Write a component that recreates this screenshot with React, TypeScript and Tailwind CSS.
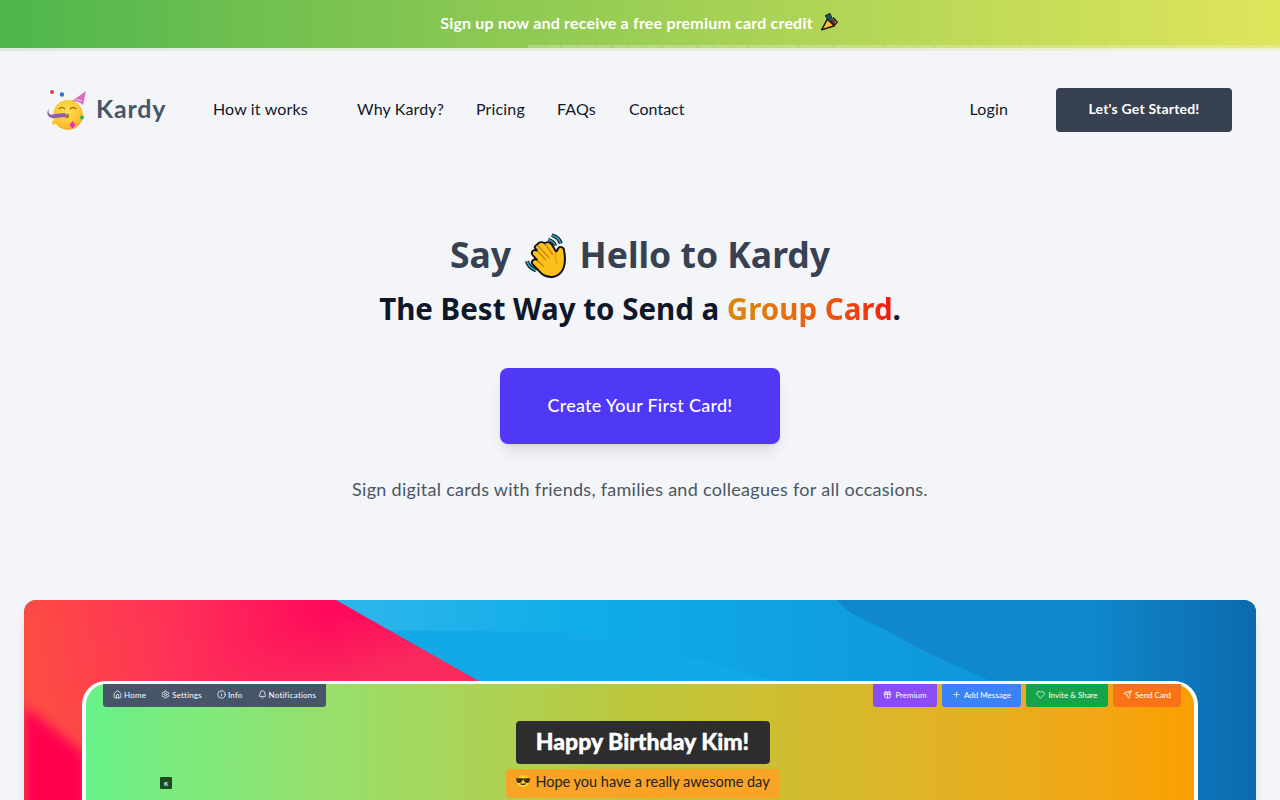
import type { ReactNode } from "react";
import { Home, Settings, Info, Bell, Gift, Plus, Heart, Send } from "lucide-react";

function Wallpaper() {
  return (
    <svg className="absolute inset-0 h-full w-full" viewBox="0 0 1232 300" preserveAspectRatio="none">
      <defs>
        <linearGradient id="blue" x1="0" y1="0" x2="1" y2="0">
          <stop offset="0.25" stopColor="#2fb6ec" />
          <stop offset="0.45" stopColor="#10ade8" />
          <stop offset="0.7" stopColor="#0f9bdc" />
          <stop offset="1" stopColor="#0f90d2" />
        </linearGradient>
        <linearGradient id="deep" x1="0" y1="0" x2="1" y2="0">
          <stop offset="0.6" stopColor="#1088cc" />
          <stop offset="1" stopColor="#0b6aad" />
        </linearGradient>
        <linearGradient id="red" gradientUnits="userSpaceOnUse" x1="10" y1="60" x2="300" y2="0">
          <stop offset="0" stopColor="#fd4c44" />
          <stop offset="0.5" stopColor="#ff3058" />
          <stop offset="1" stopColor="#ff0a5c" />
        </linearGradient>
        <linearGradient id="lower" gradientUnits="userSpaceOnUse" x1="300" y1="20" x2="320" y2="84">
          <stop offset="0" stopColor="#f8305c" stopOpacity="0" />
          <stop offset="1" stopColor="#f8305c" stopOpacity="0.85" />
        </linearGradient>
        <filter id="soft">
          <feGaussianBlur stdDeviation="6" />
        </filter>
      </defs>
      <rect width="1232" height="300" fill="url(#blue)" />
      <path d="M532 32 C620 45 690 62 760 84 L360 84 L360 30 Z" fill="#13a9e6" />
      <path d="M813 0 C830 20 850 22 880 40 C910 58 950 72 972 84 L972 300 L1232 300 L1232 0 Z" fill="url(#deep)" />
      <path d="M0 0 L312 0 L456 82 L456 300 L0 300 Z" fill="url(#red)" />
      <path d="M110 20 L347 20 L456 82 L456 90 L110 90 Z" fill="url(#lower)" />
      <path d="M0 105 L62 155 L62 300 L0 300 Z" fill="#ff0650" filter="url(#soft)" />
    </svg>
  );
}

function PartyFace() {
  return (
    <svg width="42" height="42" viewBox="16 10 42 42" className="shrink-0">
      <defs>
        <radialGradient id="face" cx="0.45" cy="0.35" r="0.7">
          <stop offset="0" stopColor="#fde050" />
          <stop offset="0.75" stopColor="#fbc02d" />
          <stop offset="1" stopColor="#f29a1f" />
        </radialGradient>
      </defs>
      <circle cx="38" cy="36" r="15" fill="url(#face)" />
      <path d="M42 22 L56 12 L53 26 C50 23 46 22 42 22 Z" fill="#d46fc0" />
      <path d="M44 20 L52 22" stroke="#f3a8dc" strokeWidth="1.5" />
      <path d="M29 30 Q32 27 35 30 M40 30 Q43 27 46 30" stroke="#7a4a14" strokeWidth="1.1" fill="none" />
      <path d="M19 30 C17 35 21 37 25 35 L35 34 L36 38 L25 39 C19 40 15 35 19 30 Z" fill="#8e5bb5" />
      <circle cx="37" cy="37" r="2.2" fill="#a5773a" />
      <circle cx="22" cy="13" r="2" fill="#e03a3a" />
      <circle cx="32" cy="15.5" r="2.2" fill="#2e74d8" />
      <circle cx="52" cy="38.5" r="2" fill="#27b36a" />
      <path d="M42.5 42 L45.5 46 L42.5 49.5 L39.5 46 Z" fill="#ee2bc0" />
      <circle cx="24" cy="43.5" r="2.2" fill="#f6c63c" />
    </svg>
  );
}

function WavingHand() {
  return (
    <svg
      width="63"
      height="52"
      viewBox="0 0 56 50"
      preserveAspectRatio="none"
      className="mb-[-12px] ml-[-2px] mr-[-11px] mt-[-12px] inline-block align-[-2px]"
    >
      <path d="M30 5 C34 6 37 9 38 13" stroke="#111" strokeWidth="3.6" fill="none" />
      <path d="M30 5 C34 6 37 9 38 13" stroke="#2eaad0" strokeWidth="1.6" fill="none" />
      <path d="M27 9 C30 10 32 12 33.5 15" stroke="#111" strokeWidth="3" fill="none" />
      <path d="M27 9 C30 10 32 12 33.5 15" stroke="#2eaad0" strokeWidth="1.2" fill="none" />
      <path d="M8 30 C9 34 12 37 16 39" stroke="#111" strokeWidth="3.6" fill="none" />
      <path d="M8 30 C9 34 12 37 16 39" stroke="#2eaad0" strokeWidth="1.6" fill="none" />
      <path
        d="M17 14 C19 11 22 11 24 13 C25 11 28 11 30 14 L34 21 L35.5 18 C37 15 41 16 41 20 C42.5 29 42 36 38 41 C33 47 26 46 21 42 L13 33 C11 30 14 27 17 29 L13 24 C11 21 14 18 17 20 L15 17 C14.5 16 15.5 15 17 14 Z"
        fill="#fcc21b"
        stroke="#111"
        strokeWidth="1.8"
        strokeLinejoin="round"
      />
      <path d="M17 20 L25 29 M17 14.5 L28 27 M24 13 L31 24 M17 29 L23 35" stroke="#c9820f" strokeWidth="1.3" fill="none" />
      <path d="M34 21 C33 26 33 30 35 33" stroke="#e8a012" strokeWidth="1.2" fill="none" />
    </svg>
  );
}

function Popper() {
  return (
    <svg width="22" height="22" viewBox="6 4 24 24" className="inline-block align-[-5px]">
      <path d="M10 23.5 L16 12 L24 19 Z" fill="#f8c03a" stroke="#111" strokeWidth="1.5" strokeLinejoin="round" />
      <path d="M14 8 L19 5.5 L21 10 L17 13 Z" fill="#14566b" stroke="#111" strokeWidth="1" />
      <path d="M19 13 L23 10 L27.5 15 L24 19 Z" fill="#6a2a1c" stroke="#111" strokeWidth="1" />
      <circle cx="22" cy="12" r="1.3" fill="#1d6f8f" />
      <circle cx="25" cy="15" r="1" fill="#c9a227" />
    </svg>
  );
}

function ToolItem({ icon, label }: { icon: ReactNode; label: string }) {
  return (
    <span className="flex items-center gap-[2px]">
      {icon}
      {label}
    </span>
  );
}

function ActionBtn({ color, icon, label, w }: { color: string; icon: ReactNode; label: string; w: string }) {
  return (
    <span className={`flex h-[23px] items-center justify-center gap-[3px] rounded-b-[3px] pb-[2px] text-[8px] text-white ${color} ${w}`}>
      {icon}
      {label}
    </span>
  );
}

export default function App() {
  return (
    <div className="h-screen overflow-hidden bg-[#f3f5f8] font-['Lato','Noto_Sans',sans-serif] text-gray-900">
      <div className="relative flex h-12 items-center justify-center bg-gradient-to-r from-[#4cb64d] to-[#dfe55b] pb-[2px] text-base font-bold tracking-[0.19px] text-white">
        <span>Sign up now and receive a free premium card credit</span>
        <span className="ml-[5px]"><Popper /></span>
        <div className="absolute inset-x-0 bottom-0 ml-[528px] h-[3px] bg-[repeating-linear-gradient(90deg,rgba(243,245,248,0.3)_0_15px,rgba(243,245,248,0.18)_15px_17px)]" />
        <div className="absolute inset-x-0 bottom-[-3px] h-[3px] bg-gradient-to-r from-[#4cb64d]/15 to-[#dfe55b]/25" />
      </div>

      <nav className="mt-10 flex h-11 items-center px-12 text-base tracking-[0.15px] text-[#111827]">
        <div className="flex w-[165px] items-center gap-[8px]">
          <span className="ml-[-2px]"><PartyFace /></span>
          <span className="pb-[2px] text-[25px] font-bold tracking-[0.8px] text-[#475569]">Kardy</span>
        </div>
        <a className="w-[144px] pb-[2px]">How it works</a>
        <a className="w-[119px] pb-[2px]">Why Kardy?</a>
        <a className="w-[81px] pb-[2px]">Pricing</a>
        <a className="w-[72px] pb-[2px]">FAQs</a>
        <a className="pb-[2px] tracking-normal">Contact</a>
        <a className="ml-auto mr-12 pb-[2px]">Login</a>
        <a className="flex h-11 w-44 items-center justify-center rounded bg-[#374151] pb-[2px] text-sm font-bold tracking-[0.2px] text-white">
          Let's Get Started!
        </a>
      </nav>

      <section className="mt-[99px] flex flex-col items-center">
        <h1 className="font-['Noto_Sans',sans-serif] text-[35.5px] leading-[46px] font-bold text-[#374151]">
          Say <WavingHand /> Hello to Kardy
        </h1>
        <h2 className="mt-[9px] font-['Noto_Sans',sans-serif] text-[29.5px] leading-[46px] font-bold text-[#0f172a]">
          The Best Way to Send a{" "}
          <span className="bg-gradient-to-r from-[#d98a0a] to-[#f50f0f] bg-clip-text text-transparent">Group Card</span>.
        </h2>
        <a className="mt-9 flex h-[76px] w-[280px] items-center justify-center rounded-lg bg-[#4f39f6] pb-[2px] text-lg font-medium tracking-[0.26px] text-white shadow-lg">
          Create Your First Card!
        </a>
        <p className="mt-[31px] text-lg leading-7 tracking-[0.29px] text-[#4b5563]">
          Sign digital cards with friends, families and colleagues for all occasions.
        </p>
      </section>

      <section className="relative mx-6 mt-[97px] h-[300px] overflow-hidden rounded-xl shadow-lg">
        <Wallpaper />
        <div className="relative mx-[58px] mt-[81px] h-[300px] rounded-[24px] border-x-4 border-t-[3px] border-white bg-gradient-to-r from-[#66f28a] via-[#bdc63a] to-[#fb9f00]">
          <div className="flex items-start justify-between pl-[17px] pr-[13px]">
            <div className="flex h-[23px] items-center gap-[15px] rounded-b-[3px] bg-[#475569] px-[10px] pb-[2px] text-[8px] tracking-[0.2px] text-white">
              <ToolItem icon={<Home size={9} />} label="Home" />
              <ToolItem icon={<Settings size={9} />} label="Settings" />
              <ToolItem icon={<Info size={9} />} label="Info" />
              <ToolItem icon={<Bell size={9} />} label="Notifications" />
            </div>
            <div className="flex gap-[5px]">
              <ActionBtn color="bg-[#8b4cf6]" w="w-[64px]" icon={<Gift size={9} />} label="Premium" />
              <ActionBtn color="bg-[#3b82f6]" w="w-[79px]" icon={<Plus size={9} />} label="Add Message" />
              <ActionBtn color="bg-[#16a34a]" w="w-[82px]" icon={<Heart size={9} />} label="Invite & Share" />
              <ActionBtn color="bg-[#f97316]" w="w-[68px]" icon={<Send size={9} />} label="Send Card" />
            </div>
          </div>
          <div className="mt-[14px] flex flex-col items-center pl-[5px]">
            <div className="flex h-[43px] w-[254px] items-center justify-center rounded bg-[#2d2d2d] pb-[3px] text-[23px] font-black text-white [-webkit-text-stroke:0.4px_white]">
              Happy Birthday Kim!
            </div>
            <div className="mt-[5px] flex h-[29px] w-[274px] items-center justify-center gap-[4px] rounded bg-[#f9a426] pb-[3px] text-[14.5px] text-[#222]">
              <span className="text-[13px]">😎</span> Hope you have a really awesome day
            </div>
          </div>
          <span className="absolute left-[74px] top-[93px] flex h-3 w-3 items-center justify-center rounded-[1px] bg-[#1f4a1f] text-[6px] font-bold text-white">
            K
          </span>
        </div>
      </section>
    </div>
  );
}
